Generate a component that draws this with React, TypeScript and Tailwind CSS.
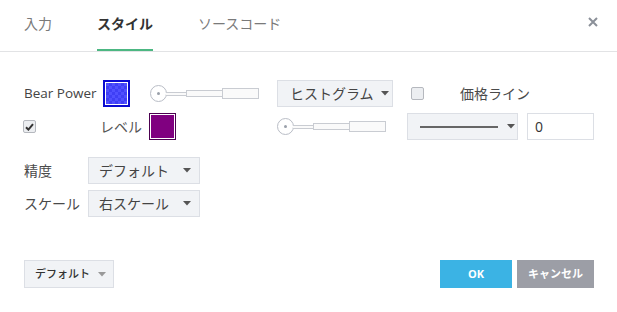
import React from "react";

const font = { fontFamily: "'Open Sans', 'Noto Sans CJK JP', sans-serif" };

function Caret({ color = "#555" }: { color?: string }) {
  return (
    <svg width="8" height="5" viewBox="0 0 8 5" className="shrink-0">
      <path d="M0 0 L8 0 L4 4.5 Z" fill={color} />
    </svg>
  );
}

function Slider() {
  return (
    <div className="flex items-center">
      <div className="w-[17px] h-[17px] rounded-full border border-[#b9bdc6] bg-white flex items-center justify-center shrink-0">
        <div className="w-[3px] h-[3px] rounded-full bg-[#9aa0aa]" />
      </div>
      <div className="w-[21px] h-[4px] border border-[#c9ccd2] border-l-0 bg-[#fafafa] -ml-[1px]" />
      <div className="w-[37px] h-[7px] border border-[#c9ccd2] bg-[#fafafa] -ml-[1px]" />
      <div className="w-[37px] h-[11px] border border-[#c9ccd2] bg-[#fafafa] -ml-[1px]" />
    </div>
  );
}

function Checkbox({ checked }: { checked?: boolean }) {
  return (
    <div className="w-[13px] h-[13px] rounded-[2px] border border-[#b5b8be] bg-[#eceef1] flex items-center justify-center shrink-0">
      {checked && (
        <svg width="9" height="8" viewBox="0 0 9 8">
          <path d="M1 4.2 L3.4 6.6 L8 1.2" stroke="#333" strokeWidth="2" fill="none" />
        </svg>
      )}
    </div>
  );
}

export default function App() {
  return (
    <div className="w-[617px] h-[312px] bg-white relative text-[#4a4a4a]" style={font}>
      {/* header */}
      <div className="h-[52px] border-b border-[#e2e3e5] flex items-stretch pl-[24px] relative">
        <div className="flex items-center text-[14px] text-[#7a7a7a] mr-[45px] pb-[5px] whitespace-nowrap">入力</div>
        <div className="flex items-center text-[14px] font-bold text-[#333] mr-[45px] relative pb-[5px] whitespace-nowrap">
          スタイル
          <div className="absolute left-0 right-0 bottom-0 h-[2px] bg-[#4cb782]" />
        </div>
        <div className="flex items-center text-[14px] text-[#7a7a7a] pb-[5px] whitespace-nowrap">ソースコード</div>
        <div className="absolute right-[18px] top-[16px]">
          <svg width="12" height="12" viewBox="0 0 12 12">
            <path d="M2 2 L10 10 M10 2 L2 10" stroke="#8b9099" strokeWidth="2" />
          </svg>
        </div>
      </div>

      {/* body */}
      <div className="pl-[24px] pt-[28px] text-[14px]">
        {/* row 1 */}
        <div className="flex items-center h-[27px]">
          <div className="w-[79px] whitespace-nowrap text-[13.5px] text-[#444]">Bear Power</div>
          <div className="w-[27px] h-[27px] border-2 border-[#0a0ad0] p-[1px] bg-white shrink-0">
            <div
              className="w-full h-full bg-[#4646ff]"
              style={{
                backgroundImage:
                  "repeating-conic-gradient(#3f3ff5 0% 25%, #5050ff 0% 50%)",
                backgroundSize: "6px 6px",
              }}
            />
          </div>
          <div className="ml-[20px]">
            <Slider />
          </div>
          <div className="ml-[18px] w-[116px] h-[27px] bg-[#f1f3f6] border border-[#dcdfe5] flex items-center pl-[12px]">
            <span className="text-[14px] text-[#444] whitespace-nowrap">ヒストグラム</span>
            <div className="ml-[7px]">
              <Caret />
            </div>
          </div>
          <div className="ml-[18px]">
            <Checkbox />
          </div>
          <div className="ml-[36px] text-[14px] whitespace-nowrap">価格ライン</div>
        </div>

        {/* row 2 */}
        <div className="flex items-center h-[27px] mt-[6px]">
          <div className="w-[77px] -ml-[1px]">
            <Checkbox checked />
          </div>
          <div className="text-[14px] text-[#555] w-[49px] whitespace-nowrap">レベル</div>
          <div className="w-[27px] h-[27px] border border-[#4b0050] p-[1px] bg-white shrink-0">
            <div className="w-full h-full bg-[#800080]" />
          </div>
          <div className="ml-[101px]">
            <Slider />
          </div>
          <div className="ml-[21px] w-[111px] h-[27px] bg-[#f1f3f6] border border-[#dcdfe5] flex items-center pl-[12px]">
            <div className="w-[78px] h-[2px] bg-[#666]" />
            <div className="ml-[9px]">
              <Caret />
            </div>
          </div>
          <div className="ml-[9px] w-[67px] h-[27px] border border-[#dcdfe5] bg-white flex items-center pl-[7px] text-[14px] text-[#333]">
            0
          </div>
        </div>

        {/* row 3 */}
        <div className="flex items-center h-[27px] mt-[17px]">
          <div className="w-[64px] whitespace-nowrap">精度</div>
          <div className="w-[112px] h-[27px] bg-[#f1f3f6] border border-[#dcdfe5] flex items-center justify-between pl-[10px] pr-[8px]">
            <span className="text-[14px] text-[#444] whitespace-nowrap">デフォルト</span>
            <Caret />
          </div>
        </div>

        {/* row 4 */}
        <div className="flex items-center h-[27px] mt-[6px]">
          <div className="w-[64px] whitespace-nowrap">スケール</div>
          <div className="w-[112px] h-[27px] bg-[#f1f3f6] border border-[#dcdfe5] flex items-center justify-between pl-[10px] pr-[8px]">
            <span className="text-[14px] text-[#444] whitespace-nowrap">右スケール</span>
            <Caret />
          </div>
        </div>
      </div>

      {/* footer */}
      <div className="absolute left-[24px] right-[23px] top-[260px] flex items-center">
        <div className="w-[90px] h-[28px] bg-[#f1f3f6] border border-[#dcdfe5] flex items-center pl-[10px] gap-[8px]">
          <span className="text-[11px] font-medium text-[#333] whitespace-nowrap">デフォルト</span>
          <Caret color="#999" />
        </div>
        <div className="flex-1" />
        <div className="w-[72px] h-[28px] bg-[#3bb3e4] flex items-center justify-center text-white font-bold text-[11px]">
          OK
        </div>
        <div className="ml-[5px] w-[77px] h-[28px] bg-[#9c9ea6] flex items-center justify-center text-white font-bold text-[11px] whitespace-nowrap">
          キャンセル
        </div>
      </div>
    </div>
  );
}
